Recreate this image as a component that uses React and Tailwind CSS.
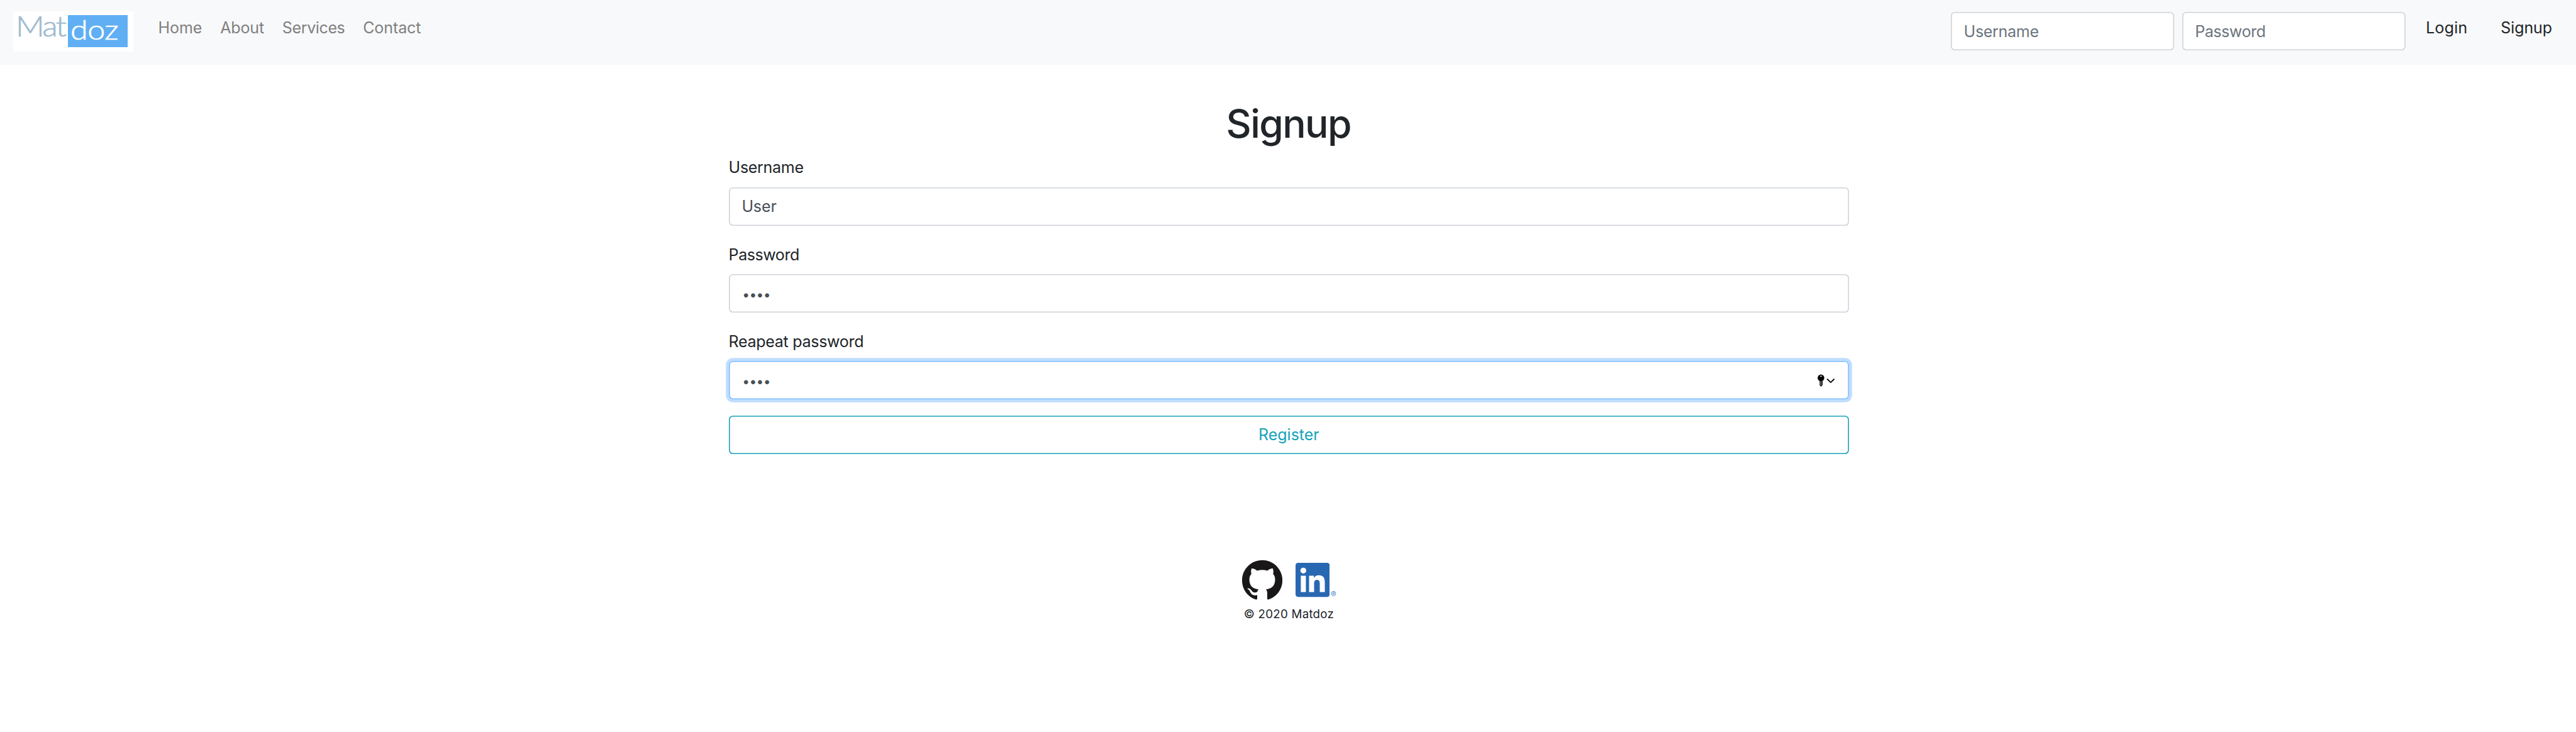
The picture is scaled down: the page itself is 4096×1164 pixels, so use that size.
import { SiGithub } from "react-icons/si";
import { FaLinkedin } from "react-icons/fa";

function Field({ label, labelClass, children, focused }) {
  return (
    <div className="mb-[26.3px] last:mb-0">
      <div className={`leading-[38.5px] ${labelClass}`}>{label}</div>
      <div
        className={
          "mt-[12.25px] flex h-[61px] items-center justify-between rounded-[6.4px] bg-white pl-[20.8px] pr-[20.6px] text-[#495057] " +
          (focused
            ? "shadow-[inset_0_0_0_1.6px_#80bdff,0_0_0_4.8px_#bfdeff]"
            : "shadow-[inset_0_0_0_1.6px_#ced4da]")
        }
      >
        {children}
      </div>
    </div>
  );
}

function Dots() {
  return <span className="ml-[0.8px] mt-[3px] text-[21px] tracking-[-0.6px]">••••</span>;
}

function KeyIcon() {
  return (
    <svg className="h-[22.5px] w-[32.1px]" viewBox="0 0 40 28" fill="none">
      <circle cx="9.3" cy="8.6" r="6.6" fill="#000" />
      <circle cx="9.3" cy="5.4" r="1.4" fill="#fff" />
      <path d="M6.8 13h5v2.4l1.2.8-1 1.3 1 1.3-1 1.3 1 1.3-1.2 1.4v1L9.3 25.8 6.8 23.6z" fill="#000" />
      <path d="M9.3 15v8.5" stroke="#fff" strokeWidth="1" />
      <path d="M22 11.2l6.6 6.3 6.6-6.3" stroke="#000" strokeWidth="2.2" strokeLinecap="round" />
    </svg>
  );
}

export default function App() {
  return (
    <div className="h-[1164px] w-[4096px] overflow-hidden bg-white font-['Inter',sans-serif] text-[25px] text-[#212529]">
      <nav className="flex h-[102.7px] items-start bg-[#f8f9fa]">
        <div className="ml-[20.9px] mt-[17.7px] flex h-[64.2px] w-[191px] bg-white font-['Lato',sans-serif] text-[45px] font-light">
          <div className="w-[87.4px] pl-[4.5px] leading-[47.8px] tracking-[-2.3px] text-[#9fbbd1] [-webkit-text-stroke:0.7px_#9fbbd1]">
            <span className="inline-block origin-left scale-x-112">Mat</span>
          </div>
          <div className="mt-[6.4px] h-[50.6px] w-[95.2px] bg-[#60aff4] pl-[3.8px] text-[44px] leading-[45px] tracking-[-0.4px] text-white [-webkit-text-stroke:0.7px_#fff]">
            <span className="inline-block origin-left scale-x-114">doz</span>
          </div>
        </div>
        <div className="ml-[39.5px] mt-[24.6px] flex gap-[28.7px] leading-[38.5px] text-[#7f8080]">
          <a>Home</a>
          <a className="tracking-[-0.1px]">About</a>
          <a className="tracking-[-0.37px]">Services</a>
          <a className="tracking-[-0.08px]">Contact</a>
        </div>
        <div className="ml-auto mt-[19.3px] flex gap-[12.4px] leading-[62px] text-[#6c757d]">
          <div className="h-[61px] w-[355.2px] rounded-[6.4px] bg-white pl-[20.4px] tracking-[-0.29px] shadow-[inset_0_0_0_1.6px_#ced4da]">Username</div>
          <div className="h-[61px] w-[355.2px] rounded-[6.4px] bg-white pl-[20.4px] tracking-[-0.43px] shadow-[inset_0_0_0_1.6px_#ced4da]">Password</div>
        </div>
        <div className="ml-[32.4px] mt-[24.6px] w-[119px] leading-[38.5px] tracking-[0.15px]">Login</div>
        <div className="mr-[38.1px] mt-[24.6px] leading-[38.5px] tracking-[-0.12px]">Signup</div>
      </nav>

      <main className="ml-[1158.6px] w-[1781.6px] pt-[55.4px]">
        <h1 className="mb-[12.4px] pr-[1.4px] text-center text-[62.3px] font-medium leading-[77px] tracking-[-1.6px]">Signup</h1>
        <form>
          <Field label="Username" labelClass="tracking-[-0.29px]">
            <span className="tracking-[-0.13px]">User</span>
          </Field>
          <Field label="Password" labelClass="tracking-[-0.43px]">
            <Dots />
          </Field>
          <Field label="Reapeat password" labelClass="tracking-[-0.29px]" focused>
            <Dots />
            <KeyIcon />
          </Field>
        </form>
        <div className="mt-[25.7px] h-[61px] rounded-[6.4px] text-center leading-[61px] text-[#17a2b8] shadow-[inset_0_0_0_1.6px_#17a2b8]">Register</div>
        <footer className="mt-[167.7px]">
          <div className="flex h-[64.2px] justify-center gap-[20.9px]">
            <SiGithub className="size-[64.2px] text-[#191717]" />
            <div className="flex w-[64.2px] items-start">
              <FaLinkedin className="mt-[1.5px] h-[62px] w-[54.3px] shrink-0 text-[#2867b2]" />
              <span className="mt-[49px] pl-[1.8px] text-[13px] font-light leading-[13px] text-[#2867b2]">®</span>
            </div>
          </div>
          <div className="mt-[7.7px] text-center text-[18.7px] leading-[29px] tracking-[0.27px]">© 2020 Matdoz</div>
        </footer>
      </main>
    </div>
  );
}
